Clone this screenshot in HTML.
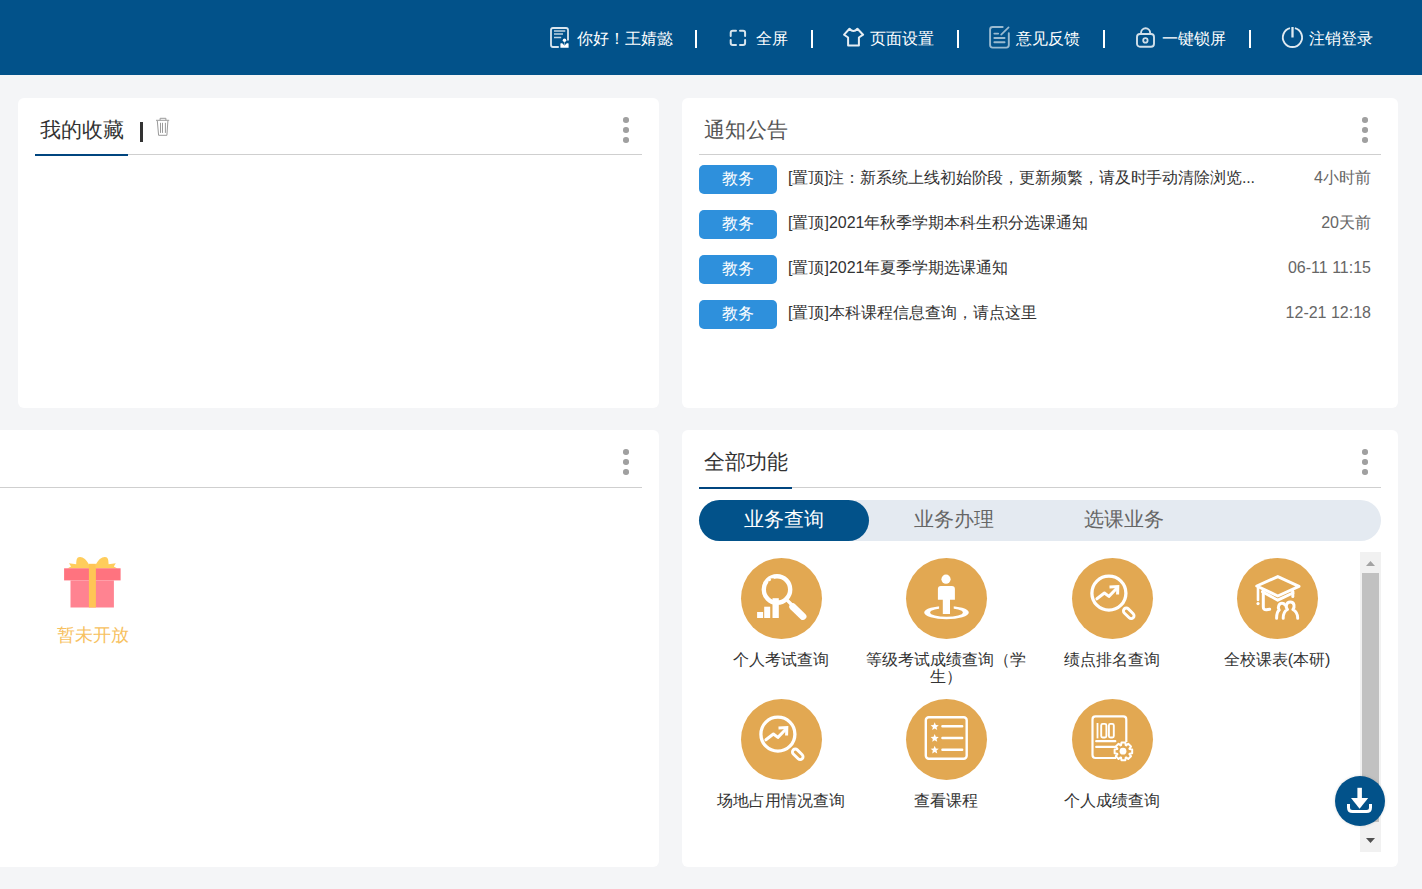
<!DOCTYPE html>
<html><head><meta charset="utf-8">
<style>
html,body{margin:0;padding:0;}
body{width:1422px;height:889px;overflow:hidden;position:relative;background:#f4f5f7;font-family:"Liberation Sans",sans-serif;color:#333;}
.abs{position:absolute;}
#hdr{position:absolute;left:0;top:0;width:1422px;height:75px;background:#02528a;}
.ht{position:absolute;top:28px;height:22px;line-height:22px;font-size:16px;color:#fff;white-space:nowrap;}
.hs{position:absolute;top:30px;width:2px;height:18px;background:#fff;}
.hi{position:absolute;}
.card{position:absolute;background:#fff;border-radius:6px;overflow:hidden;}
.gline{position:absolute;height:1px;background:#cfcfcf;}
.bline{position:absolute;height:2px;background:#00457f;}
.title{position:absolute;font-size:20.5px;line-height:24px;white-space:nowrap;}
.dots{position:absolute;width:6px;height:26px;}
.dots i{position:absolute;left:0.2px;width:5.6px;height:5.6px;border-radius:50%;background:#a0a0a0;}
.badge{position:absolute;left:699px;width:78px;height:29px;border-radius:5px;background:#2e90dc;color:#fff;font-size:16px;line-height:27px;text-align:center;}
.ntxt{position:absolute;left:788px;font-size:16px;line-height:20px;color:#333;white-space:nowrap;}
.ntime{position:absolute;right:51px;font-size:16px;line-height:20px;color:#666;white-space:nowrap;text-align:right;}
.circ{position:absolute;width:81px;height:81px;border-radius:50%;background:#e2a852;}
.circ svg{position:absolute;left:0;top:0;}
.lbl{position:absolute;width:170px;text-align:center;font-size:16px;line-height:17px;margin-top:1px;color:#333;white-space:nowrap;}
</style></head>
<body>
<div id="hdr">
  <!-- icons + texts -->
  <svg class="hi" style="left:548px;top:25px" width="24" height="26" viewBox="0 0 24 26" fill="none" stroke="#fff">
<path d="M10.8 22 H5 Q3 22 3 20 V5 Q3 3 5 3 H18 Q20 3 20 5 V15.4" stroke-width="1.8" opacity="0.85"/>
<path d="M6 5.94 H17.25 M6 9 H15 M6 12.5 H13.2" stroke-width="1.6" opacity="0.75"/>
<circle cx="16.5" cy="15.3" r="1.75" fill="#fff" stroke="none"/>
<path d="M16.5 17 V20" stroke-width="0.8" opacity="0.6"/>
<path d="M12.4 18.6 Q13 17.9 14.2 18.3 L16.5 20.6 L18.8 18.3 Q20 17.9 20.6 18.6 V22.8 H12.4 Z" fill="#fff" stroke="none"/>
</svg>
  <div class="ht" style="left:577px">你好！王婧懿</div>
  <div class="hs" style="left:695px"></div>
  <svg class="hi" style="left:727px;top:27px" width="22" height="22" viewBox="0 0 22 22" fill="none" stroke="#fff" stroke-width="2" opacity="0.85" stroke-linecap="round">
<path d="M3.7 9 V5.8 Q3.7 3.8 5.7 3.8 H9 M13 3.8 H16.1 Q18.1 3.8 18.1 5.8 V9 M3.7 13 V16.1 Q3.7 18.1 5.7 18.1 H9 M13 18.1 H16.1 Q18.1 18.1 18.1 16.1 V13"/>
</svg>
  <div class="ht" style="left:756px">全屏</div>
  <div class="hs" style="left:811px"></div>
  <svg class="hi" style="left:841px;top:26px" width="24" height="24" viewBox="0 0 24 24" fill="none" stroke="#fff" stroke-width="2" opacity="0.9" stroke-linejoin="round">
<path d="M8.5 2.75 Q12.5 7.2 16.4 2.75 L22.1 8.7 L17.9 11.5 V19.6 H7.1 V11.5 L3.1 8.7 Z"/>
</svg>
  <div class="ht" style="left:870px">页面设置</div>
  <div class="hs" style="left:957px"></div>
  <svg class="hi" style="left:986px;top:25px" width="26" height="26" viewBox="0 0 26 26" fill="none" stroke="#fff" stroke-width="1.9" opacity="0.6" stroke-linecap="round">
<path d="M16.7 2.06 H6.6 Q4.1 2.06 4.1 4.56 V20.1 Q4.1 22.6 6.6 22.6 H20.3 Q22.8 22.6 22.8 20.1 V8.1"/>
<path d="M15.2 9.7 L22.6 2.4" stroke-width="1.7"/>
<path d="M8.3 8.6 H12.2 M8.3 13 H18.6 M8.3 17.25 H18.6" stroke-width="1.8"/>
</svg>
  <div class="ht" style="left:1016px">意见反馈</div>
  <div class="hs" style="left:1103px"></div>
  <svg class="hi" style="left:1133px;top:25px" width="24" height="24" viewBox="0 0 24 24" fill="none" stroke="#fff" stroke-width="1.9" opacity="0.82">
<rect x="4" y="9" width="17" height="12.8" rx="3"/>
<path d="M8.05 9 V7.85 A4.55 4.55 0 0 1 17.15 7.85 V9"/>
<circle cx="12.4" cy="15.4" r="2.2" stroke-width="1.8"/>
</svg>
  <div class="ht" style="left:1162px">一键锁屏</div>
  <div class="hs" style="left:1249px"></div>
  <svg class="hi" style="left:1279px;top:24px" width="28" height="28" viewBox="0 0 28 28" fill="none" stroke="#fff" stroke-width="1.9" opacity="0.88">
<path d="M15.93 4.18 A9.6 9.6 0 1 1 10.97 4.18"/>
<path d="M13.5 3 V13.5" stroke-width="2.3"/>
</svg>
  <div class="ht" style="left:1309px">注销登录</div>
</div>

<!-- card 1 -->
<div class="card" style="left:18px;top:98px;width:641px;height:310px"></div>
<div class="title" style="left:40px;top:118px;color:#333">我的收藏</div>
<div class="abs" style="left:140px;top:122px;width:3px;height:20px;background:#333"></div>
<svg class="abs" style="left:150px;top:112px" width="25" height="30" viewBox="0 0 25 30" fill="none" stroke="#9a9a9a" stroke-width="1">
<path d="M6 8.3 H19.2 M10.1 8.3 V6.3 H15.9 V8.3 M7.3 8.8 L8.6 23.3 H16.9 L17.9 8.8 M10.5 10.8 V20.9 M12.5 10.8 V20.9 M15.4 10.8 V20.9"/>
</svg>
<div class="gline" style="left:35px;top:154px;width:607px"></div>
<div class="bline" style="left:35px;top:154px;width:93px"></div>
<div class="dots" style="left:623.3px;top:117px"><i style="top:0"></i><i style="top:10px"></i><i style="top:20px"></i></div>

<!-- card 2 -->
<div class="card" style="left:682px;top:98px;width:716px;height:310px"></div>
<div class="title" style="left:704px;top:118px;color:#555">通知公告</div>
<div class="gline" style="left:699px;top:154px;width:682px"></div>
<div class="dots" style="left:1362.3px;top:117px"><i style="top:0"></i><i style="top:10px"></i><i style="top:20px"></i></div>

<div class="badge" style="top:165px">教务</div>
<div class="ntxt" style="top:168px;letter-spacing:-0.1px">[置顶]注：新系统上线初始阶段，更新频繁，请及时手动清除浏览...</div>
<div class="ntime" style="top:168px">4小时前</div>
<div class="badge" style="top:210px">教务</div>
<div class="ntxt" style="top:213px">[置顶]2021年秋季学期本科生积分选课通知</div>
<div class="ntime" style="top:213px">20天前</div>
<div class="badge" style="top:255px">教务</div>
<div class="ntxt" style="top:258px">[置顶]2021年夏季学期选课通知</div>
<div class="ntime" style="top:258px">06-11 11:15</div>
<div class="badge" style="top:300px">教务</div>
<div class="ntxt" style="top:303px">[置顶]本科课程信息查询，请点这里</div>
<div class="ntime" style="top:303px">12-21 12:18</div>

<!-- card 3 -->
<div class="card" style="left:-20px;top:430px;width:679px;height:437px"></div>
<div class="gline" style="left:0px;top:487px;width:642px"></div>
<div class="dots" style="left:623.3px;top:449px"><i style="top:0"></i><i style="top:10px"></i><i style="top:20px"></i></div>
<svg class="abs" style="left:60px;top:550px" width="65" height="60" viewBox="0 0 65 60">
<path d="M29.5 15.5 C26.5 9.5 23 6.8 19.8 7 C16.6 7.2 16.4 9.5 16.2 14.3 L9 13.2 L11 16.5 L7.3 18.4 H29.5 Z" fill="#ffcd5c"/>
<path d="M35.3 15.5 C38.3 9.5 41.8 6.8 45 7 C48.2 7.2 48.4 9.5 48.6 14.3 L55.8 13.2 L53.8 16.5 L57.5 18.4 H35.3 Z" fill="#ffcd5c"/>
<rect x="4.1" y="18.3" width="56.5" height="12.1" fill="#ff737f"/>
<rect x="10.5" y="30.4" width="43.4" height="27.1" fill="#ff8391"/>
<rect x="28.9" y="13.8" width="7" height="43.7" fill="#ffc555"/>
</svg>
<div class="abs" style="left:57px;top:624px;font-size:18px;line-height:22px;color:#f7c160;white-space:nowrap">暂未开放</div>

<!-- card 4 -->
<div class="card" style="left:682px;top:430px;width:716px;height:437px"></div>
<div class="title" style="left:704px;top:450px;color:#333">全部功能</div>
<div class="gline" style="left:699px;top:487px;width:682px"></div>
<div class="bline" style="left:699px;top:487px;width:93px"></div>
<div class="dots" style="left:1362.3px;top:449px"><i style="top:0"></i><i style="top:10px"></i><i style="top:20px"></i></div>

<div class="abs" style="left:699px;top:500px;width:682px;height:41px;border-radius:20.5px;background:#e4eaf1"></div>
<div class="abs" style="left:699px;top:500px;width:170px;height:41px;border-radius:20.5px;background:#02528a"></div>
<div class="abs" style="left:699px;top:504px;width:170px;text-align:center;font-size:20px;line-height:30px;color:#fff">业务查询</div>
<div class="abs" style="left:869px;top:504px;width:170px;text-align:center;font-size:20px;line-height:30px;color:#666">业务办理</div>
<div class="abs" style="left:1039px;top:504px;width:170px;text-align:center;font-size:20px;line-height:30px;color:#666">选课业务</div>

<!-- grid -->
<div class="circ" style="left:741px;top:558px"><svg width="81" height="81" viewBox="0 0 81 81">
<circle cx="36" cy="31.5" r="13.2" fill="none" stroke="#fff" stroke-width="4.4"/>
<rect x="16.1" y="54" width="6" height="6" fill="#fff"/>
<rect x="23.2" y="48.7" width="6" height="11.3" fill="#fff"/>
<rect x="31.5" y="40.2" width="6.3" height="19.8" fill="#fff"/><path d="M29.5 20.5 L33 20.2 L31 23.8 Z M27.6 22.8 L27.2 26.6 L30.2 24.6 Z" fill="#e2a852"/>
<path d="M46 42 L51.5 47.5" stroke="#fff" stroke-width="3.2"/>
<path d="M51.8 48.7 L61.9 58.4" stroke="#fff" stroke-width="7" stroke-linecap="round"/>
</svg></div>
<div class="circ" style="left:906px;top:558px"><svg width="81" height="81" viewBox="0 0 81 81">
<path fill="#fff" fill-rule="evenodd" d="M18.2 54.6 A22.3 6.7 0 1 0 62.8 54.6 A22.3 6.7 0 1 0 18.2 54.6 Z M24.1 54.6 A16.4 4.25 0 1 0 56.9 54.6 A16.4 4.25 0 1 0 24.1 54.6 Z"/>
<rect x="33.1" y="46.5" width="14.6" height="5.5" fill="#e2a852"/>
<circle cx="40" cy="21.2" r="4.6" fill="#fff"/>
<path d="M31.9 41.8 V31 Q31.9 28 34.9 28 H45.9 Q48.9 28 48.9 31 V41.8 Z" fill="#fff"/>
<rect x="36.8" y="41" width="7.2" height="15" fill="#fff"/>
</svg></div>
<div class="circ" style="left:1072px;top:558px"><svg width="81" height="81" viewBox="0 0 81 81">
<circle cx="36.9" cy="35.15" r="17" fill="none" stroke="#fff" stroke-width="3.3"/>
<path d="M24.9 40.8 L32.4 35 L36.9 38.4 L44.8 30.3" fill="none" stroke="#fff" stroke-width="3" stroke-linejoin="round" stroke-linecap="round"/>
<path d="M37.5 28.9 L45.8 28.6 L45.6 36.5" fill="none" stroke="#fff" stroke-width="3" stroke-linejoin="miter"/>
<path d="M54.3 52.9 L59.2 57.8" stroke="#fff" stroke-width="8.6" stroke-linecap="round"/>
<path d="M54.3 52.9 L59.2 57.8" stroke="#e2a852" stroke-width="2.8" stroke-linecap="round"/>
</svg></div>
<div class="circ" style="left:1237px;top:558px"><svg width="81" height="81" viewBox="0 0 81 81" fill="none" stroke="#fff" stroke-width="3.2" stroke-linejoin="round" stroke-linecap="round">
<path d="M19.8 28 L40.8 18.6 L62 28.4 L40.8 38 Z" stroke-width="3"/>
<path d="M25.5 33.7 L40.8 42.2 L55.8 35" stroke-width="3"/>
<path d="M55.8 33.3 V38.5" stroke-width="3"/>
<path d="M26.3 31.7 V49 Q26.3 52 29.5 51.8 L32.7 51.2" stroke-width="3"/>
<path d="M21 28.5 V42" stroke-width="2.6"/>
<circle cx="21" cy="45.6" r="1.6" fill="#fff" stroke="none"/>
<path d="M46.2 60.3 C46.2 56 47.5 53 50.5 51.5 C49 50 49.2 47.8 49.5 46.8 C50 44.8 51.5 44 53.25 44 C55 44 56.6 45 57 47 C57.3 48.5 56.9 50.3 55.9 51.5 C58.7 53 60.7 56 60.7 60.3" stroke-width="3"/>
<path d="M39.6 60.3 C39.6 56 40.3 53.5 42.2 52 C41.2 50.5 41.3 48.5 41.8 47.5 C42.5 46 43.8 45.3 45 45.3 C46.3 45.3 47.4 46 48 47" stroke-width="3"/>
</svg></div>
<div class="circ" style="left:741px;top:699px"><svg width="81" height="81" viewBox="0 0 81 81">
<circle cx="36.9" cy="35.15" r="17" fill="none" stroke="#fff" stroke-width="3.3"/>
<path d="M24.9 40.8 L32.4 35 L36.9 38.4 L44.8 30.3" fill="none" stroke="#fff" stroke-width="3" stroke-linejoin="round" stroke-linecap="round"/>
<path d="M37.5 28.9 L45.8 28.6 L45.6 36.5" fill="none" stroke="#fff" stroke-width="3" stroke-linejoin="miter"/>
<path d="M54.3 52.9 L59.2 57.8" stroke="#fff" stroke-width="8.6" stroke-linecap="round"/>
<path d="M54.3 52.9 L59.2 57.8" stroke="#e2a852" stroke-width="2.8" stroke-linecap="round"/>
</svg></div>
<div class="circ" style="left:906px;top:699px"><svg width="81" height="81" viewBox="0 0 81 81">
<rect x="19.8" y="18.3" width="40.9" height="41.4" rx="3" fill="none" stroke="#fff" stroke-width="2.4"/>
<path d="M36.4 27.3 H56.2 M36.4 39 H56.2 M36.4 50.7 H56.2" stroke="#fff" stroke-width="2.4" stroke-linecap="round"/>
<path d="M28.70 23.30 L29.84 26.03 L32.79 26.27 L30.54 28.20 L31.23 31.08 L28.70 29.54 L26.17 31.08 L26.86 28.20 L24.61 26.27 L27.56 26.03 Z" fill="#fff"/><path d="M28.70 35.00 L29.84 37.73 L32.79 37.97 L30.54 39.90 L31.23 42.78 L28.70 41.23 L26.17 42.78 L26.86 39.90 L24.61 37.97 L27.56 37.73 Z" fill="#fff"/><path d="M28.70 46.70 L29.84 49.43 L32.79 49.67 L30.54 51.60 L31.23 54.48 L28.70 52.94 L26.17 54.48 L26.86 51.60 L24.61 49.67 L27.56 49.43 Z" fill="#fff"/>
</svg></div>
<div class="circ" style="left:1072px;top:699px"><svg width="81" height="81" viewBox="0 0 81 81" fill="none" stroke="#fff">
<path d="M44 59 H23.5 Q20.5 59 20.5 56 V20.4 Q20.5 17.4 23.5 17.4 H51.3 Q54.3 17.4 54.3 20.4 V43" stroke-width="2.2"/>
<path d="M25.5 24 V39.4" stroke-width="1.8"/>
<rect x="29.2" y="24.9" width="5.2" height="13.6" rx="1.5" stroke-width="1.9"/>
<rect x="36.9" y="24.9" width="4.9" height="13.6" rx="1.5" stroke-width="1.9"/>
<path d="M24.2 42.2 H43.3 M24.2 47.9 H43.3" stroke-width="2.2" stroke-linecap="round"/>
<path d="M57.60 50.12 L60.18 50.44 L60.18 54.36 L57.60 54.68 L57.39 55.17 L59.00 57.22 L56.22 60.00 L54.17 58.39 L53.68 58.60 L53.36 61.18 L49.44 61.18 L49.12 58.60 L48.63 58.39 L46.58 60.00 L43.80 57.22 L45.41 55.17 L45.20 54.68 L42.62 54.36 L42.62 50.44 L45.20 50.12 L45.41 49.63 L43.80 47.58 L46.58 44.80 L48.63 46.41 L49.12 46.20 L49.44 43.62 L53.36 43.62 L53.68 46.20 L54.17 46.41 L56.22 44.80 L59.00 47.58 L57.39 49.63 Z" stroke-width="2" stroke-linejoin="round" fill="#e2a852"/>
<circle cx="51" cy="52.2" r="3.4" fill="#fff" stroke="none"/>
</svg></div>

<div class="lbl" style="left:696px;top:650px">个人考试查询</div>
<div class="lbl" style="left:861px;top:650px">等级考试成绩查询（学<br>生）</div>
<div class="lbl" style="left:1027px;top:650px">绩点排名查询</div>
<div class="lbl" style="left:1192px;top:650px">全校课表(本研)</div>
<div class="lbl" style="left:696px;top:791px">场地占用情况查询</div>
<div class="lbl" style="left:861px;top:791px">查看课程</div>
<div class="lbl" style="left:1027px;top:791px">个人成绩查询</div>

<!-- scrollbar -->
<div class="abs" style="left:1360px;top:552px;width:21px;height:300px;background:#f1f1f1"></div>
<div class="abs" style="left:1362px;top:573px;width:17px;height:249px;background:#c1c1c1"></div>
<svg class="abs" style="left:1360px;top:552px" width="21" height="21" viewBox="0 0 21 21"><path d="M6 14 L10.5 9 L15 14 Z" fill="#a3a3a3"/></svg>
<svg class="abs" style="left:1360px;top:831px" width="21" height="21" viewBox="0 0 21 21"><path d="M6 7 L15 7 L10.5 12 Z" fill="#505050"/></svg>

<!-- download button -->
<div class="abs" style="left:1335px;top:776px;width:50px;height:50px;border-radius:50%;background:#02528a;box-shadow:0 0 3px rgba(0,0,0,0.15)"></div>
<svg class="abs" style="left:1335px;top:776px" width="50" height="50" viewBox="0 0 50 50">
<rect x="22.4" y="11.8" width="4.5" height="11" fill="#fff"/>
<path d="M16 22 H33.2 L24.6 32.7 Z" fill="#fff"/>
<path d="M13.5 28 V31.5 Q13.5 35.5 17.5 35.5 H31.5 Q35.5 35.5 35.5 31.5 V28" fill="none" stroke="#fff" stroke-width="3"/>
</svg>
</body></html>
